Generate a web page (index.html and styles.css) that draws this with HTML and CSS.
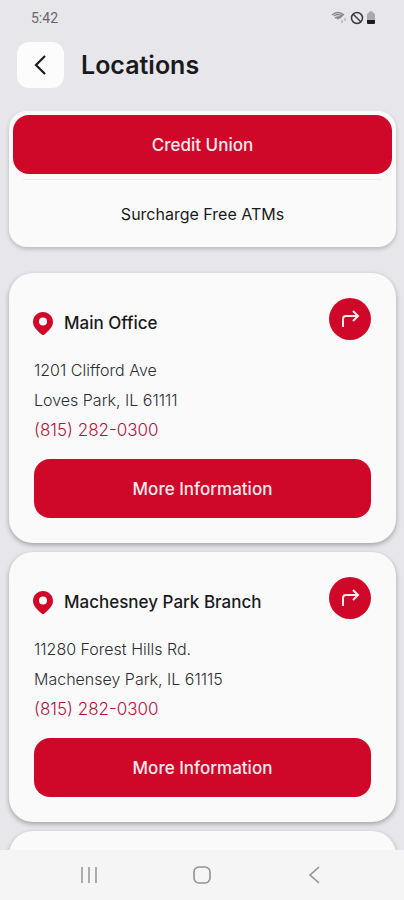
FILE: index.html
```html
<!DOCTYPE html>
<html lang="en">
<head>
    <meta charset="UTF-8">
    <meta name="viewport" content="width=device-width, initial-scale=1.0">
    <title>Locations</title>
    <link rel="stylesheet" href="styles.css">
</head>
<body>
    <div class="status-bar">
        <span>5:42</span>
        <div class="status-icons">
            <svg width="16" height="14" viewBox="0 0 16 14" fill="none" stroke="#88888d">
                <path d="M1 4 Q7 -1 13 4 M3 5 Q7 2 11 5 M4 7 Q7 5 10 7" stroke-width="1.5"/>
                <path d="M6 8 L12 4" stroke-width="2"/>
                <path d="M11 9v3M14 7v3" stroke="#a0a0a5"/>
            </svg>
            <svg width="14" height="14" viewBox="0 0 14 14" fill="none" stroke="#3a3a3e" stroke-width="1.5">
                <circle cx="7" cy="7" r="5.5"/>
                <path d="M3 3l8 8"/>
            </svg>
            <svg width="8" height="13" viewBox="0 0 8 13">
                <path d="M0 4q0-2 2-2.500Q2.500 0 4 0t2 1.500Q8 2 8 4v6H0z" fill="#a9a9ae"/>
                <path d="M0 9h8v3q0 1-1 1H1q-1 0-1-1z" fill="#1c1c1e"/>
            </svg>
        </div>
    </div>

    <header class="header">
        <button class="back-btn" aria-label="Back">
            <svg width="14" height="22" viewBox="0 0 14 22" fill="none" stroke="#1a1a1c" stroke-width="2.2">
                <path d="M11 2L2 11l9 9"/>
            </svg>
        </button>
        <h1>Locations</h1>
    </header>

    <main class="content">
        <div class="tabs">
            <button class="tab active">Credit Union</button>
            <div class="divider"></div>
            <button class="tab">Surcharge Free ATMs</button>
        </div>

        <!-- Branch list -->
        <section class="card">
            <div class="card-top">
                <div class="card-title">
                    <svg class="pin" width="20" height="23" viewBox="0 0 20 23">
                        <path fill="#cf0829" fill-rule="evenodd" d="M10 0C4.400 0 0 4.400 0 10c0 5 4 8.500 8.600 12.400q1.400 1.200 2.800 0C16 18.500 20 15 20 10 20 4.400 15.600 0 10 0zm0 5.600a4 4 0 1 1 0 8 4 4 0 0 1 0-8z"/>
                    </svg>
                    <h2>Main Office</h2>
                </div>
                <button class="directions-btn" aria-label="Directions">
                    <svg width="20" height="20" viewBox="0 0 20 20" fill="none" stroke="#ffe9ed" stroke-width="2">
                        <path d="M3 18v-8q0-3 3-3h12M13 2l5 5-5 5"/>
                    </svg>
                </button>
            </div>
            <address>
                1201 Clifford Ave<br>
                Loves Park, IL 61111<br>
                <a href="tel:8152820300">(815) 282-0300</a>
            </address>
            <button class="info-btn">More Information</button>
        </section>

        <section class="card">
            <div class="card-top">
                <div class="card-title">
                    <svg class="pin" width="20" height="23" viewBox="0 0 20 23">
                        <path fill="#cf0829" fill-rule="evenodd" d="M10 0C4.400 0 0 4.400 0 10c0 5 4 8.500 8.600 12.400q1.400 1.200 2.800 0C16 18.500 20 15 20 10 20 4.400 15.600 0 10 0zm0 5.600a4 4 0 1 1 0 8 4 4 0 0 1 0-8z"/>
                    </svg>
                    <h2>Machesney Park Branch</h2>
                </div>
                <button class="directions-btn" aria-label="Directions">
                    <svg width="20" height="20" viewBox="0 0 20 20" fill="none" stroke="#ffe9ed" stroke-width="2">
                        <path d="M3 18v-8q0-3 3-3h12M13 2l5 5-5 5"/>
                    </svg>
                </button>
            </div>
            <address>
                11280 Forest Hills Rd.<br>
                Machensey Park, IL 61115<br>
                <a href="tel:8152820300">(815) 282-0300</a>
            </address>
            <button class="info-btn">More Information</button>
        </section>

        <section class="card"></section>
    </main>

    <nav class="nav-bar">
        <button aria-label="Recent apps">
            <svg width="18" height="18" viewBox="0 0 18 18" stroke="#9a9a9c" stroke-width="1.6">
                <path d="M2 1v16M9 1v16M16 1v16"/>
            </svg>
        </button>
        <button aria-label="Home">
            <svg width="18" height="18" viewBox="0 0 18 18" fill="none" stroke="#929294" stroke-width="1.6">
                <rect x="1" y="1" width="16" height="16" rx="5"/>
            </svg>
        </button>
        <button aria-label="Back">
            <svg width="18" height="18" viewBox="0 0 18 18" fill="none" stroke="#929294" stroke-width="1.6">
                <path d="M13 1L4 9l9 8"/>
            </svg>
        </button>
    </nav>
</body>
</html>
```
FILE: styles.css
```css
* {
    box-sizing: border-box;
}

body {
    font-family: Inter, "Liberation Sans", sans-serif;
    font-size: 16px;
    color: #1a1a1c;
    background-color: #e6e6eb;
    margin: 0;
    height: 100vh;
    display: flex;
    flex-direction: column;
    overflow: hidden;
}

button {
    font-family: inherit;
    font-size: 16px;
    color: inherit;
    background: none;
    border: none;
    padding: 0;
    cursor: pointer;
}

svg {
    display: block;
}

/* Status bar */
.status-bar {
    display: flex;
    justify-content: space-between;
    align-items: center;
    height: 35px;
    padding: 0 29px 0 31px;
    font-family: Roboto, sans-serif;
    font-size: 14px;
    color: #66666a;
}

.status-icons {
    display: flex;
    align-items: center;
    gap: 3px;
}

/* Header */
.header {
    display: flex;
    align-items: center;
    gap: 17px;
    padding: 7px 17px 23px;
}

.back-btn {
    display: flex;
    align-items: center;
    justify-content: center;
    width: 47px;
    height: 46px;
    background-color: #fcfcfd;
    border-radius: 12px;
}

.header h1 {
    margin: 0;
    font-size: 25px;
    font-weight: 600;
}

.content {
    flex: 1;
    min-height: 0;
    padding: 0 8px 0 9px;
    overflow: hidden;
}

/* Tabs */
.tabs {
    display: flex;
    flex-direction: column;
    margin-bottom: 26px;
    padding: 4px;
    background-color: #fafafb;
    border-radius: 18px;
    box-shadow: 0 2px 4px rgba(0, 0, 0, 0.2);
}

.tab {
    height: 59px;
    border-radius: 16px;
}

.tab.active {
    background-color: #cf0829;
    color: #ffe9ed;
    font-size: 17px;
    font-weight: 500;
}

.divider {
    height: 1px;
    margin: 5px 10px 4px;
    background-color: #ececef;
}

/* Branch cards */
.card {
    min-height: 270px;
    margin-bottom: 9px;
    padding: 25px;
    background-color: #fafafb;
    border-radius: 24px;
    box-shadow: 0 2px 5px rgba(0, 0, 0, 0.3);
}

.card-top {
    display: flex;
    justify-content: space-between;
    align-items: flex-end;
}

.card-title {
    display: flex;
    align-items: center;
    gap: 11px;
    height: 34px;
}

.pin {
    margin-left: -1px;
}

.card-title h2 {
    margin: 0;
    font-size: 17px;
    font-weight: 500;
}

.directions-btn {
    display: flex;
    align-items: center;
    justify-content: center;
    width: 42px;
    height: 42px;
    background-color: #cf0829;
    border-radius: 50%;
}

address {
    margin: 15px 0 14px;
    font-style: normal;
    font-weight: 300;
    line-height: 30px;
    color: #2e2e32;
}

address a {
    font-size: 17px;
    color: #b5103a;
    text-decoration: none;
}

.info-btn {
    display: block;
    width: 100%;
    height: 59px;
    background-color: #cf0829;
    color: #ffe9ed;
    font-size: 17px;
    font-weight: 500;
    border-radius: 16px;
}

/* System navigation */
.nav-bar {
    display: flex;
    justify-content: space-around;
    align-items: center;
    height: 50px;
    padding: 0 32px;
    background-color: #f5f5f5;
}
```
